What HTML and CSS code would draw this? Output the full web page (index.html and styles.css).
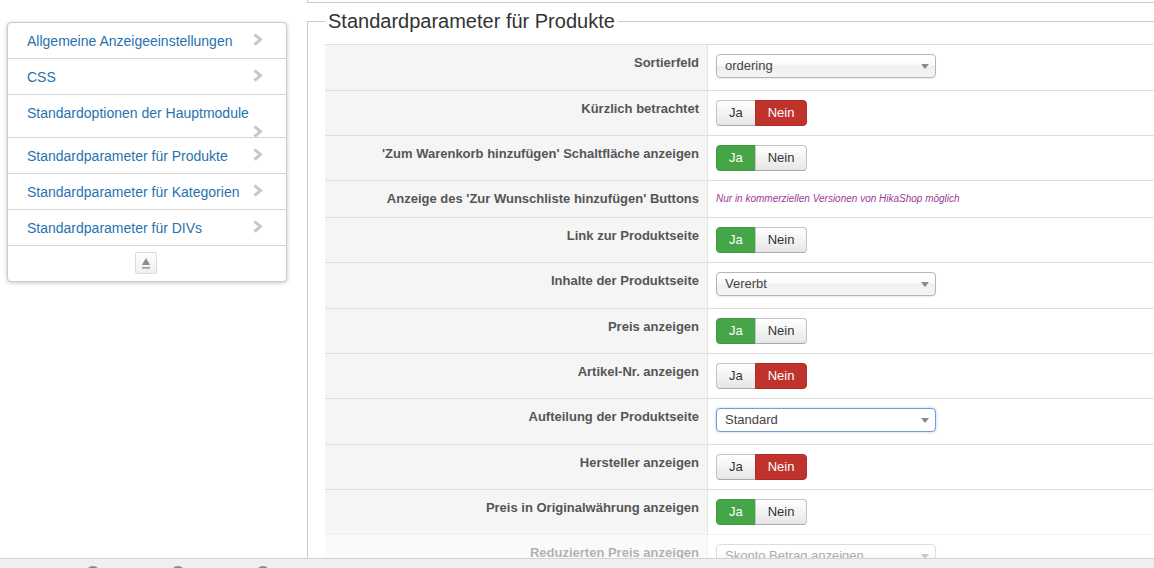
FILE: index.html
```html
<!DOCTYPE html>
<html lang="de">
<head>
  <meta charset="UTF-8" />
  <meta name="viewport" content="width=device-width, initial-scale=1.0"/>
  <title>HikaShop Konfiguration</title>
  <link rel="stylesheet" href="styles.css">
</head>
<body>
  <div class="page">
    <aside class="sidebar">
      <ul class="nav-list">
        <li><a href="#">Allgemeine Anzeigeeinstellungen</a><span class="chev"><svg width="11" height="13" viewBox="0 0 11 13"><polyline points="2.5,1.5 8.5,6.5 2.5,11.5"/></svg></span></li>
        <li><a href="#">CSS</a><span class="chev"><svg width="11" height="13" viewBox="0 0 11 13"><polyline points="2.5,1.5 8.5,6.5 2.5,11.5"/></svg></span></li>
        <li><a href="#">Standardoptionen der Hauptmodule</a><span class="chev"><svg width="11" height="13" viewBox="0 0 11 13"><polyline points="2.5,1.5 8.5,6.5 2.5,11.5"/></svg></span></li>
        <li><a href="#">Standardparameter für Produkte</a><span class="chev"><svg width="11" height="13" viewBox="0 0 11 13"><polyline points="2.5,1.5 8.5,6.5 2.5,11.5"/></svg></span></li>
        <li><a href="#">Standardparameter für Kategorien</a><span class="chev"><svg width="11" height="13" viewBox="0 0 11 13"><polyline points="2.5,1.5 8.5,6.5 2.5,11.5"/></svg></span></li>
        <li><a href="#">Standardparameter für DIVs</a><span class="chev"><svg width="11" height="13" viewBox="0 0 11 13"><polyline points="2.5,1.5 8.5,6.5 2.5,11.5"/></svg></span></li>
        <li class="nav-footer">
          <button class="collapse-btn" title="Einklappen">
            <svg width="20" height="20" viewBox="0 0 20 20">
              <polygon points="6,12 10,5 14,12" fill="#8c8c8c"/>
              <rect x="6" y="14" width="8" height="1.6" fill="#9a9a9a"/>
            </svg>
          </button>
        </li>
      </ul>
    </aside>

    <main class="content">
      <div class="prev-box"></div>
      <fieldset class="params">
        <legend>Standardparameter für Produkte</legend>
        <table>
          <tbody>
            <tr>
              <td class="label">Sortierfeld</td>
              <td class="value"><div class="select"><span>ordering</span><i class="arrow"></i></div></td>
            </tr>
            <tr>
              <td class="label">Kürzlich betrachtet</td>
              <td class="value"><div class="yesno"><span class="btn">Ja</span><span class="btn no-active">Nein</span></div></td>
            </tr>
            <tr>
              <td class="label">'Zum Warenkorb hinzufügen' Schaltfläche anzeigen</td>
              <td class="value"><div class="yesno"><span class="btn yes-active">Ja</span><span class="btn">Nein</span></div></td>
            </tr>
            <tr>
              <td class="label">Anzeige des 'Zur Wunschliste hinzufügen' Buttons</td>
              <td class="value"><span class="note">Nur in kommerziellen Versionen von HikaShop möglich</span></td>
            </tr>
            <tr>
              <td class="label">Link zur Produktseite</td>
              <td class="value"><div class="yesno"><span class="btn yes-active">Ja</span><span class="btn">Nein</span></div></td>
            </tr>
            <tr>
              <td class="label">Inhalte der Produktseite</td>
              <td class="value"><div class="select"><span>Vererbt</span><i class="arrow"></i></div></td>
            </tr>
            <tr>
              <td class="label">Preis anzeigen</td>
              <td class="value"><div class="yesno"><span class="btn yes-active">Ja</span><span class="btn">Nein</span></div></td>
            </tr>
            <tr>
              <td class="label">Artikel-Nr. anzeigen</td>
              <td class="value"><div class="yesno"><span class="btn">Ja</span><span class="btn no-active">Nein</span></div></td>
            </tr>
            <tr>
              <td class="label">Aufteilung der Produktseite</td>
              <td class="value"><div class="select focused"><span>Standard</span><i class="arrow"></i></div></td>
            </tr>
            <tr>
              <td class="label">Hersteller anzeigen</td>
              <td class="value"><div class="yesno"><span class="btn">Ja</span><span class="btn no-active">Nein</span></div></td>
            </tr>
            <tr>
              <td class="label">Preis in Originalwährung anzeigen</td>
              <td class="value"><div class="yesno"><span class="btn yes-active">Ja</span><span class="btn">Nein</span></div></td>
            </tr>
            <tr class="faded">
              <td class="label">Reduzierten Preis anzeigen</td>
              <td class="value"><div class="select"><span>Skonto Betrag anzeigen</span><i class="arrow"></i></div></td>
            </tr>
          </tbody>
        </table>
      </fieldset>
    </main>
  </div>

  <div class="statusbar">
    <span class="dot"></span>
    <span class="dot"></span>
    <span class="dot"></span>
  </div>
</body>
</html>
```

FILE: styles.css
```css
html, body {
  height: 100%;
}
body {
  margin: 0;
  font-family: "Liberation Sans", Arial, sans-serif;
  font-size: 13px;
  color: #333;
  background: #fff;
  overflow: hidden;
}
.page {
  display: flex;
  align-items: flex-start;
}

/* sidebar */
.sidebar {
  width: 307px;
  flex: none;
  padding: 22px 0 0 7px;
  box-sizing: border-box;
}
.nav-list {
  list-style: none;
  margin: 0;
  padding: 0;
  width: 280px;
  border: 1px solid #c9c9c9;
  border-radius: 4px;
  box-shadow: 0 1px 4px rgba(0, 0, 0, 0.22);
  box-sizing: border-box;
  background: #fff;
}
.nav-list li {
  display: flow-root;
  padding: 8px 23px 7px 19px;
  line-height: 20px;
  font-size: 14px;
  border-top: 1px solid #d4d4d4;
}
.nav-list li:first-child {
  border-top: none;
}
.nav-list a {
  color: #2872b0;
  text-decoration: none;
}
.chev {
  float: right;
  width: 11px;
  height: 13px;
  margin: 2px 0 -8px 9px;
}
.chev svg {
  display: block;
}
.chev polyline {
  fill: none;
  stroke: #c8c8c8;
  stroke-width: 3;
}
.nav-list li.nav-footer {
  padding: 6px 0 7px;
  line-height: 0;
  text-align: center;
}
.collapse-btn {
  width: 22px;
  height: 22px;
  padding: 0;
  border: 1px solid #dcdcdc;
  border-radius: 2px;
  background: linear-gradient(#fdfdfd, #efefef);
  display: inline-flex;
  align-items: center;
  justify-content: center;
  margin-left: -2px;
}

/* main */
.content {
  flex: 1;
  min-width: 0;
}
.prev-box {
  height: 2px;
  border-left: 1px solid #c9c9c9;
  border-bottom: 1px solid #c9c9c9;
}
.params {
  margin: 6px 0 0;
  padding: 0 0 0 17px;
  border: 1px solid #c9c9c9;
  border-right: none;
  border-bottom: none;
  min-width: 0;
}
.params legend {
  font-size: 20px;
  line-height: 24px;
  padding: 0 3px;
  color: #333;
}
.params table {
  margin-top: 11px;
  width: 100%;
  border-collapse: separate;
  border-spacing: 0;
  table-layout: fixed;
}
.params td {
  box-sizing: border-box;
  border-top: 1px solid #dedede;
  vertical-align: top;
  padding: 9px 8px;
  line-height: 18px;
}
.params td.label {
  width: 383px;
  background: #f5f5f5;
  border-right: 1px solid #e6e6e6;
  text-align: right;
  font-weight: bold;
  color: #555;
}
.note {
  display: block;
  height: 18px;
  font-size: 10px;
  font-style: italic;
  color: #9b3a98;
}
.faded {
  opacity: 0.45;
}

/* controls */
.select {
  position: relative;
  width: 220px;
  height: 24px;
  margin-bottom: 3px;
  box-sizing: border-box;
  border: 1px solid #b5b5b5;
  border-radius: 4px;
  background: linear-gradient(#fff 20%, #f8f8f8 50%, #efefef 52%, #f5f5f5 100%);
  box-shadow: 0 1px 1px rgba(0, 0, 0, 0.08);
  padding: 0 8px;
  line-height: 22px;
  color: #444;
}
.select.focused {
  border-color: #6f9fd8;
  box-shadow: 0 0 3px rgba(80, 130, 200, 0.45);
  background: #fff;
}
.select .arrow {
  position: absolute;
  right: 6px;
  top: 9px;
  width: 0;
  height: 0;
  border-left: 4px solid transparent;
  border-right: 4px solid transparent;
  border-top: 5px solid #8a8a8a;
}
.yesno {
  display: inline-flex;
}
.btn {
  display: inline-block;
  height: 26px;
  box-sizing: border-box;
  padding: 0 12px;
  line-height: 24px;
  font-size: 13px;
  color: #333;
  border: 1px solid #c3c3c3;
  border-bottom-color: #a9a9a9;
  background: linear-gradient(#ffffff, #e6e6e6);
}
.btn:first-child {
  border-radius: 4px 0 0 4px;
}
.btn + .btn {
  margin-left: -1px;
  border-radius: 0 4px 4px 0;
}
.btn.yes-active {
  background: #46a546;
  border-color: #3e9a3e;
  color: #fff;
}
.btn.no-active {
  background: #c0322c;
  border-color: #b02c27;
  color: #fff;
}

/* bottom bar */
.statusbar {
  position: fixed;
  left: 0;
  right: 0;
  bottom: 0;
  height: 9px;
  border-top: 1px solid #d3d3d3;
  background: #efefef;
  display: flex;
  gap: 71px;
  padding-left: 86px;
  overflow: hidden;
}
.dot {
  width: 14px;
  height: 14px;
  margin-top: 7px;
  border-radius: 50%;
  background: #8a8a8a;
  flex: none;
}
```
